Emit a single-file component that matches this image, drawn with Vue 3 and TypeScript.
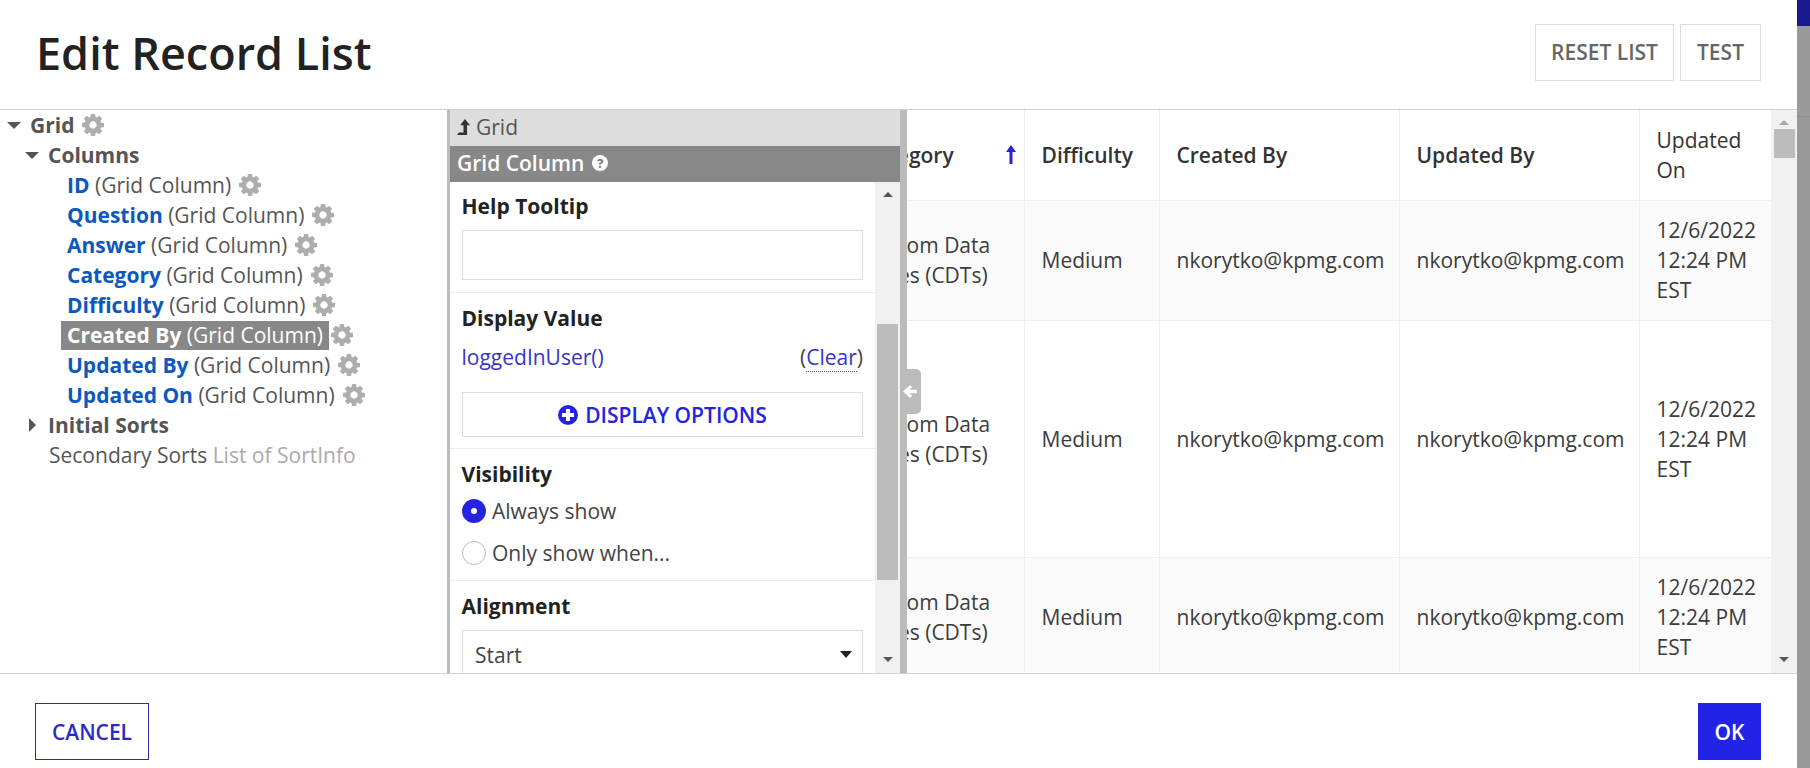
<template>
  <div class="page">
    <div class="dialog">
      <header class="top">
        <h1 class="title">Edit Record List</h1>
        <div class="top-actions">
          <button class="btn-plain btn-reset">RESET LIST</button>
          <button class="btn-plain btn-test">TEST</button>
        </div>
      </header>

      <div class="body">
        <aside class="tree">
          <div class="tree-row level-0">
            <span class="tri-down"></span>
            <b class="node">Grid</b>
            <svg class="gear" viewBox="0 0 1536 1536"><path :d="COG" /></svg>
          </div>
          <div class="tree-row level-1">
            <span class="tri-down"></span>
            <b class="node">Columns</b>
          </div>
          <div v-for="col in treeColumns" :key="col" class="tree-row level-2">
            <span class="leaf" :class="{ selected: col === 'Created By' }"><b class="leaf-name">{{ col }}</b> (Grid Column)</span>
            <svg class="gear" viewBox="0 0 1536 1536"><path :d="COG" /></svg>
          </div>
          <div class="tree-row level-1">
            <span class="tri-right"></span>
            <b class="node">Initial Sorts</b>
          </div>
          <div class="tree-row level-1b">Secondary Sorts <span class="muted">List of SortInfo</span></div>
        </aside>

        <section class="config">
          <div class="crumb">
            <svg class="crumb-icon" viewBox="0 0 14 17"><path d="M8.500 0 14 6.500h-3.200V17H0l2-2.600h5V6.500H3.500z" /></svg>
            Grid
          </div>
          <div class="config-title">
            Grid Column
            <span class="help">?</span>
          </div>
          <div class="config-main">
            <div class="config-scroll">
              <div class="group group-help">
                <div class="label">Help Tooltip</div>
                <div class="input"></div>
              </div>
              <div class="group group-display">
                <div class="label">Display Value</div>
                <div class="value-row">
                  <span class="expr">loggedInUser()</span>
                  <span>(<span class="clear">Clear</span>)</span>
                </div>
                <div class="btn-options">
                  <svg class="plus" viewBox="0 0 20 20">
                    <circle cx="10" cy="10" r="10" />
                    <path d="M8 4h4v4h4v4h-4v4H8v-4H4V8h4z" fill="#fff" />
                  </svg>
                  DISPLAY OPTIONS
                </div>
              </div>
              <div class="group group-visibility">
                <div class="label">Visibility</div>
                <div class="radio-row">
                  <span class="radio on"></span>
                  Always show
                </div>
                <div class="radio-row">
                  <span class="radio"></span>
                  Only show when...
                </div>
              </div>
              <div class="group group-align">
                <div class="label">Alignment</div>
                <div class="select">
                  Start
                  <span class="select-caret"></span>
                </div>
              </div>
            </div>
            <div class="scrollbar">
              <span class="arrow-up"></span>
              <div class="track track-config"><div class="thumb"></div></div>
              <span class="arrow-down"></span>
            </div>
          </div>
        </section>

        <div class="splitter">
          <div class="splitter-tab">
            <svg viewBox="0 0 14 14" width="15" height="15"><path d="M7.500 1 9.500 3 6.800 5.400H14v3.200H6.800L9.500 11l-2 2L1 7z" /></svg>
          </div>
        </div>

        <section class="grid">
          <div class="grid-view">
            <table class="records">
              <colgroup>
                <col style="width: 178px" />
                <col style="width: 135px" />
                <col style="width: 240px" />
                <col style="width: 240px" />
                <col style="width: 132px" />
              </colgroup>
              <thead>
                <tr>
                  <th class="th-sort">
                    Category
                    <svg class="sort" viewBox="0 0 10 19"><path d="M5 0 10 7H6.500v12h-3V7H0z" /></svg>
                  </th>
                  <th>Difficulty</th>
                  <th>Created By</th>
                  <th>Updated By</th>
                  <th>Updated<br />On</th>
                </tr>
              </thead>
              <tbody>
                <tr v-for="row in rows" :key="row.id" :class="{ alt: row.alt }" :style="{ height: row.height + 'px' }">
                  <td>Custom Data<br />Types (CDTs)</td>
                  <td>Medium</td>
                  <td>nkorytko@kpmg.com</td>
                  <td>nkorytko@kpmg.com</td>
                  <td>12/6/2022<br />12:24 PM<br />EST</td>
                </tr>
              </tbody>
            </table>
          </div>
          <div class="scrollbar">
            <span class="arrow-up"></span>
            <div class="track track-grid"><div class="thumb"></div></div>
            <span class="arrow-down"></span>
          </div>
        </section>
      </div>

      <footer class="bottom">
        <button class="btn-cancel">CANCEL</button>
        <button class="btn-ok">OK</button>
      </footer>
    </div>
    <div class="backdrop">
      <div class="backdrop-bar"></div>
      <div class="backdrop-head"></div>
    </div>
  </div>
</template>

<script setup lang="ts">
const COG =
  'M1024 768q0-106-75-181t-181-75-181 75-75 181 75 181 181 75 181-75 75-181zm512-109v222q0 12-8 23t-20 13l-185 28q-19 54-39 91 35 50 107 138 10 12 10 25t-9 23q-27 37-99 108t-94 71q-12 0-26-9l-138-108q-44 23-91 38-16 136-29 186-7 28-36 28h-222q-14 0-24.500-8.500t-11.500-21.500l-28-184q-49-16-90-37l-141 107q-10 9-25 9-14 0-25-11-126-114-165-168-7-10-7-23 0-12 8-23 15-21 51-66.500t54-70.500q-27-50-41-99l-183-27q-13-2-21-12.500t-8-23.500v-222q0-12 8-23t19-13l186-28q14-46 39-92-40-57-107-138-10-12-10-24 0-10 9-23 26-36 98.500-107.500t94.500-71.500q13 0 26 10l138 107q44-23 91-38 16-136 29-186 7-28 36-28h222q14 0 24.500 8.500t11.500 21.500l28 184q49 16 90 37l142-107q9-9 24-9 13 0 25 10 129 119 165 170 7 8 7 22 0 12-8 23-15 21-51 66.500t-54 70.500q26 50 41 98l183 28q13 2 21 12.500t8 23.500z'

const treeColumns: string[] = [
  'ID',
  'Question',
  'Answer',
  'Category',
  'Difficulty',
  'Created By',
  'Updated By',
  'Updated On',
]

const rows = [
  { id: 1, alt: true, height: 120 },
  { id: 2, alt: false, height: 237 },
  { id: 3, alt: true, height: 119 },
]
</script>

<style>
html,
body {
  margin: 0;
  overflow: hidden;
}
</style>

<style scoped>
.page {
  display: flex;
  width: 1810px;
  height: 768px;
  font-family: "Open Sans", "Noto Sans", sans-serif;
  font-size: 21px;
  line-height: 30px;
  color: #444;
  background: #fff;
}

.dialog {
  flex: 1;
  min-width: 0;
  display: flex;
  flex-direction: column;
}

.backdrop {
  width: 13px;
  background: #999;
}

.backdrop-bar {
  height: 26px;
  background: #1a1a8e;
}

.backdrop-head {
  height: 90px;
  border-bottom: 1px solid #8a8a8a;
}

.top {
  flex: none;
  display: flex;
  justify-content: space-between;
  padding: 24px 36px 0 36px;
  box-sizing: border-box;
  border-bottom: 1px solid #d2d2d2;
  height: 110px;
}

.title {
  margin: 7px 0 0;
  font-size: 45px;
  font-weight: 600;
  line-height: 44px;
  color: #222;
}

.top-actions {
  display: flex;
  gap: 6px;
}

button {
  font-family: inherit;
  font-size: 21px;
  font-weight: 600;
  cursor: pointer;
  padding: 0;
}

.btn-plain {
  height: 57px;
  padding: 0 0 1px;
  background: #fff;
  border: 1px solid #ddd;
  color: #666;
}

.btn-reset {
  width: 139px;
}

.btn-test {
  width: 81px;
}

.body {
  flex: 1;
  min-height: 0;
  display: flex;
}

/* tree */
.tree {
  flex: none;
  box-sizing: border-box;
  border-right: 3px solid #bbb;
  width: 450px;
  color: #555;
}

.tree-row {
  display: flex;
  align-items: center;
  height: 30px;
  white-space: pre;
}

.level-0 {
  padding-left: 7px;
}

.level-1 {
  padding-left: 25px;
}

.level-1b {
  padding-left: 49px;
  display: block;
}

.level-2 {
  padding-left: 61px;
}

.tri-down,
.tri-right {
  width: 0;
  height: 0;
  flex: none;
}

.tri-down {
  border-left: 7px solid transparent;
  border-right: 7px solid transparent;
  border-top: 7px solid #555;
  margin-right: 9px;
}

.tri-right {
  margin-left: 4px;
  border-top: 7px solid transparent;
  border-bottom: 7px solid transparent;
  border-left: 7px solid #555;
  margin-right: 12px;
}

.node {
  font-weight: 700;
  color: #555;
}

.gear {
  width: 22px;
  height: 22px;
  margin-left: 8px;
  fill: #adadad;
  flex: none;
}

.leaf {
  padding: 0 6px;
  height: 29px;
  line-height: 29px;
}

.leaf-name {
  font-weight: 700;
  color: #0d58c0;
}

.leaf.selected {
  background: #888;
  color: #fff;
}

.leaf.selected .leaf-name {
  color: #fff;
}

.leaf + .gear {
  margin-left: 2px;
}

.muted {
  color: #aaa;
}

/* config column */
.config {
  width: 450px;
  flex: none;
  display: flex;
  flex-direction: column;
  min-height: 0;
}

.crumb {
  height: 36px;
  flex: none;
  box-sizing: border-box;
  padding: 0 0 3px 7px;
  background: #ddd;
  display: flex;
  align-items: center;
  color: #555;
}

.crumb-icon {
  width: 13px;
  height: 16px;
  fill: #333;
  margin-right: 6px;
}

.config-title {
  height: 36px;
  flex: none;
  box-sizing: border-box;
  padding: 0 0 2px 7px;
  background: #888;
  color: #fff;
  font-weight: 600;
  display: flex;
  align-items: center;
}

.help {
  width: 16px;
  height: 16px;
  margin-left: 8px;
  border-radius: 50%;
  background: #fff;
  color: #888;
  font-size: 13px;
  font-weight: 800;
  line-height: 16px;
  text-align: center;
}

.config-main {
  flex: 1;
  min-height: 0;
  display: flex;
  overflow: hidden;
}

.config-scroll {
  flex: 1;
  min-width: 0;
  overflow: hidden;
}

.group {
  padding: 0 12px;
  border-bottom: 1px solid #eee;
  box-sizing: border-box;
}

.group-help {
  height: 111px;
  padding-top: 9px;
}

.group-display {
  height: 156px;
  padding-top: 10px;
}

.group-visibility {
  height: 132px;
  padding-top: 10px;
}

.group-align {
  padding-top: 10px;
  border-bottom: 0;
}

.label {
  font-weight: 700;
  color: #222;
  margin-left: -0.5px;
}

.input {
  height: 50px;
  margin-top: 9px;
  border: 1px solid #ddd;
  box-sizing: border-box;
}

.value-row {
  display: flex;
  justify-content: space-between;
  margin-top: 9px;
  margin-left: -0.5px;
}

.expr {
  color: #3535c8;
}

.clear {
  color: #3535c8;
  border-bottom: 1px dotted #555;
}

.btn-options {
  height: 45px;
  margin-top: 20px;
  border: 1px solid #ddd;
  box-sizing: border-box;
  display: flex;
  align-items: center;
  justify-content: center;
  gap: 7px;
  color: #2323e0;
  font-weight: 600;
}

.plus {
  width: 20px;
  height: 20px;
  fill: #2323e0;
}

.radio-row {
  display: flex;
  align-items: center;
  height: 42px;
  gap: 6px;
}

.label + .radio-row {
  margin-top: 1px;
}

.radio {
  width: 24px;
  height: 24px;
  border-radius: 50%;
  box-sizing: border-box;
  border: 1px solid #bbb;
  background: #fff;
}

.radio.on {
  border: 9px solid #2323e0;
}

.select {
  position: relative;
  height: 60px;
  margin-top: 9px;
  border: 1px solid #ddd;
  box-sizing: border-box;
  padding: 9px 12px;
}

.select-caret {
  position: absolute;
  top: 20px;
  right: 10px;
  width: 0;
  height: 0;
  border-left: 6px solid transparent;
  border-right: 6px solid transparent;
  border-top: 7px solid #222;
}

.scrollbar {
  width: 25px;
  flex: none;
  background: #f1f1f1;
  display: flex;
  flex-direction: column;
  align-items: center;
}

.arrow-up,
.arrow-down {
  flex: none;
  width: 0;
  height: 0;
  border-left: 5.500px solid transparent;
  border-right: 5.500px solid transparent;
}

.arrow-up {
  margin-top: 10px;
  border-bottom: 5.500px solid #555;
}

.arrow-down {
  margin-bottom: 11px;
  border-top: 5.500px solid #555;
}

.grid .arrow-up {
  border-bottom-color: #a8a8a8;
}

.track {
  flex: 1;
  width: 100%;
  display: flex;
  flex-direction: column;
  align-items: center;
}

.thumb {
  width: 21px;
  background: #bcbcbc;
}

.track-config .thumb {
  height: 256px;
  margin-top: 127px;
}

.track-grid .thumb {
  height: 29px;
  margin-top: 4px;
}

.splitter {
  position: relative;
  width: 7px;
  flex: none;
  background: #bbb;
}

.splitter-tab {
  position: absolute;
  top: 259px;
  left: 0;
  width: 21px;
  height: 45px;
  background: #bbb;
  border-radius: 0 5px 5px 0;
  display: flex;
  align-items: center;
  justify-content: flex-start;
  padding-left: 2px;
  box-sizing: border-box;
  fill: #fff;
  z-index: 1;
}

/* record grid */
.grid {
  flex: 1;
  min-width: 0;
  display: flex;
}

.grid > .scrollbar {
  width: 26px;
}

.grid-view {
  flex: 1;
  min-width: 0;
  overflow: hidden;
}

.records {
  table-layout: fixed;
  border-collapse: collapse;
  width: 925px;
  margin-left: -61px;
  color: #3c3c3c;
}

.records tr {
  border-bottom: 1px solid #eee;
}

.records tbody tr:last-child {
  border-bottom: 0;
}

.records th,
.records td {
  padding: 0 17px;
  text-align: left;
  border-right: 1px solid #eee;
  font-weight: 400;
  box-sizing: border-box;
}

.records th:last-child,
.records td:last-child {
  border-right: 0;
}

.records thead tr {
  height: 90px;
}

.records th {
  font-weight: 600;
  color: #333;
}

.records th:last-child {
  font-weight: 400;
}

.th-sort {
  position: relative;
}

.sort {
  position: absolute;
  right: 8px;
  top: 35px;
  width: 10px;
  height: 19px;
  fill: #2323e0;
}

.alt {
  background: #fafafa;
}

/* footer */
.bottom {
  height: 95px;
  flex: none;
  box-sizing: border-box;
  border-top: 1px solid #d2d2d2;
  padding: 29px 36px 0 35px;
  display: flex;
  justify-content: space-between;
  align-items: flex-start;
}

.btn-cancel {
  width: 114px;
  height: 57px;
  background: #fff;
  border: 1px solid #2a2aa8;
  color: #2a2ac8;
}

.btn-ok {
  width: 63px;
  height: 57px;
  background: #2323e8;
  border: 0;
  color: #fff;
}
</style>
